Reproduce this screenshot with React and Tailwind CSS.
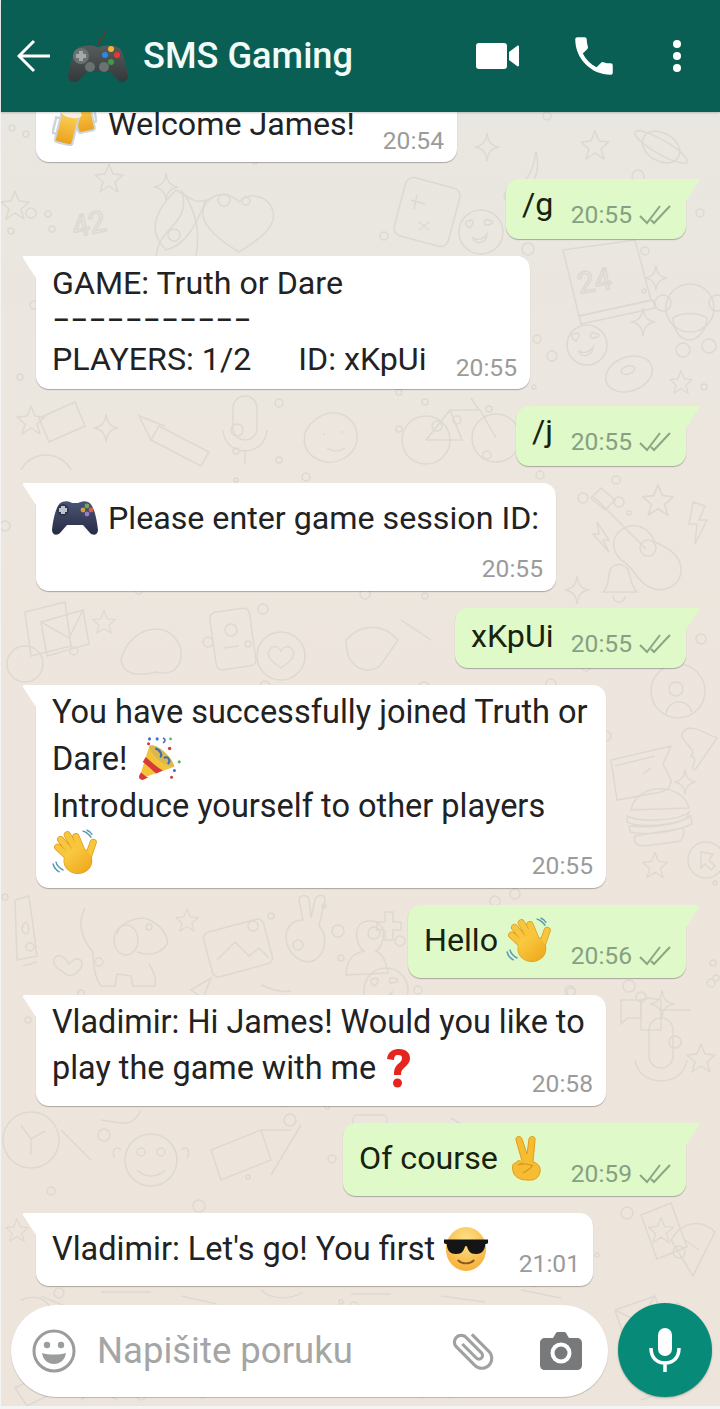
import { useId } from 'react'

// Petit générateur déterministe pour les points du papier peint
const rand = (seed) => {
  const x = Math.sin(seed * 127.1) * 43758.5453
  return x - Math.floor(x)
}
const dots = Array.from({ length: 190 }, (_, i) => ({
  x: Math.round(rand(i + 1) * 720),
  y: 112 + Math.round(rand(i + 300) * 1290),
  r: 2 + Math.round(rand(i + 700) * 4),
}))

const Star = ({ x, y, s = 1 }) => (
  <path transform={`translate(${x} ${y}) scale(${s})`} d="M0-14 4-4 14-3 6 4 9 14 0 8-9 14-6 4-14-3-4-4Z" strokeLinejoin="round" />
)
const Spark = ({ x, y, s = 1 }) => (
  <path transform={`translate(${x} ${y}) scale(${s})`} d="M0-14C1-5 4-2 11 0 4 2 1 5 0 14-1 5-4 2-11 0-4-2-1-5 0-14Z" />
)
const HeartFace = ({ x, y, r = 20 }) => (
  <g transform={`translate(${x} ${y})`}>
    <circle r={r} />
    <path d="M-11-4c-6-3-5-8-1-7 2-3 7 0 1 7ZM4-7c-2-5 3-7 5-4 4-1 5 4-5 4ZM-8 6c5 3 11 1 14-4 0 9-12 12-14 4Z" />
  </g>
)

function Wallpaper() {
  return (
    <svg className="absolute inset-0 h-full w-full" viewBox="0 112 719 1294" preserveAspectRatio="none" fill="none" stroke="#ddd9d1" strokeWidth="1.5" aria-hidden="true">
      {dots.map((d, i) => <circle key={i} cx={d.x} cy={d.y} r={d.r} />)}
      {/* haut */}
      <ellipse cx="660" cy="147" rx="20" ry="14" transform="rotate(30 660 147)" />
      <ellipse cx="660" cy="147" rx="30" ry="7" transform="rotate(30 660 147)" />
      <path d="M510 190c14-4 22-18 25-38 6 22-6 44-28 48-6 0-5-8 3-10Z" />
      <path d="M175 190c-20 20-30 40-10 60 20-5 30-25 40-50-10 5-20-5-30-10Z" />
      <path d="M290 220c10-15 30-25 20-50 16 20 20 45 14 70-20 22-50 10-34-20Z" transform="translate(-130 20)" />
      <path d="M298 232c-18-18-44 0-34 20 6 12 24 24 34 30 12-8 30-18 34-32 4-20-20-32-34-18Z" transform="translate(-60 -30)" />
      <rect x="398" y="182" width="56" height="60" rx="8" transform="rotate(15 426 212)" />
      <path d="M410 200l14 4M416 195l-3 14M418 222l10 8M428 222l-10 8" />
      <HeartFace x={480} y={232} r={22} />
      <Star x={108} y={178} /><Spark x={165} y={187} /><Star x={14} y={205} />
      <Star x={594} y={145} /><Spark x={486} y={147} />
      {/* calendrier et singe */}
      <path d="M562 250l72-10 16 60-72 16Z" />
      <path d="M578 316l74-16 2 8-74 16Z" />
      <text x="578" y="292" fontSize="30" fontFamily="Roboto" transform="rotate(-10 590 290)">24</text>
      <text x="72" y="236" fontSize="30" fontFamily="Roboto" transform="rotate(-12 80 230)">42</text>
      <circle cx="689" cy="308" r="24" />
      <circle cx="662" cy="303" r="8" /><circle cx="716" cy="303" r="8" />
      <path d="M672 318c8-6 26-6 34 0 0 10-8 22-18 22s-16-12-16-22Z" />
      <circle cx="682" cy="350" r="7" /><circle cx="708" cy="346" r="7" />
      <HeartFace x={586} y={345} />
      <ellipse cx="628" cy="374" rx="24" ry="17" transform="rotate(-20 628 374)" />
      <ellipse cx="627" cy="370" rx="7" ry="4" transform="rotate(-20 627 370)" />
      <Star x={680} y={382} s={0.8} /><Spark x={642} y={322} /><Spark x={655} y={278} s={0.9} />
      {/* vélo, micro */}
      <circle cx="425" cy="440" r="24" /><circle cx="495" cy="438" r="24" />
      <path d="M425 440l24-30h30l16 28M449 410l12 30h-36M470 398l8 12" />
      <path d="M232 408a12 12 0 0 1 24 0v20a12 12 0 0 1-24 0ZM222 430c2 28 42 28 44 0M244 450v14" />
      <path d="M314 420c16-14 40-6 42 14s-20 34-38 26-20-28-4-40ZM322 434h2M340 432h2M326 448c6 4 12 4 18 0" />
      <path d="M150 440l50 26 8-14-50-26ZM150 440l-12-24 26 10" />
      <path d="M38 418l36-16 10 24-36 16ZM20 470c10-20 40-20 50 0" />
      <Star x={30} y={420} /><Spark x={105} y={428} />
      {/* guitare, cloche */}
      <path d="M593 497l52 52" />
      <path d="M590 498l10-10 14 12-10 10Z" />
      <path d="M620 530c14-10 28-2 34 12 8 4 28 12 26 30-2 16-20 22-34 14-12-8-14-20-26-26-10-10-10-22 0-30Z" />
      <circle cx="647" cy="548" r="8" />
      <path d="M596 522l12 18-6 0 6 12-16-18h6ZM692 502l12 4-6 14 8 0-12 24 2-20-8 0Z" />
      <path d="M610 568a12 14 0 0 1 16 0c4 6 2 16 10 24h-34c8-8 4-18 8-24ZM612 596a6 6 0 0 0 12 0" />
      <Star x={657} y={500} s={1.1} /><Spark x={576} y={590} />
      {/* enveloppe, téléphone, etc. */}
      <path d="M24 612l40-10 6 44-40 10Z" /><path d="M40 622l42-12 6 34-42 12Z" /><path d="M40 622l28 16 14-28" />
      <Star x={103} y={622} s={0.8} />
      <path d="M120 660c8-34 50-44 60-10 2 18-10 26-24 22-18 4-34 4-36-12Z" />
      <rect x="212" y="610" width="40" height="58" rx="6" transform="rotate(-8 232 640)" />
      <circle cx="230" cy="630" r="6" /><path d="M222 648l16-2" />
      <circle cx="280" cy="656" r="24" /><path d="M280 668c-12-8-16-14-10-20 4-3 8-1 10 3 2-4 6-6 10-3 6 6 2 12-10 20Z" />
      <path d="M345 640c14-16 36-18 52 0l-18 26c-14 10-34 2-34-26ZM400 620l30 20" />
      <circle cx="24" cy="664" r="18" />
      {/* profil, carte, burger */}
      <circle cx="677" cy="691" r="27" /><circle cx="675" cy="689" r="7" /><path d="M665 714c2-16 22-16 26-2" />
      <path d="M610 760l60-14-8 18 8 16c0 8-4 10-10 12l-44 8ZM614 766l40-10M642 774l8-6" />
      <path d="M630 810c4-26 50-30 58-2ZM626 816c10 6 50 6 62-4l-2 6c-14 8-50 10-60 4ZM628 826c20 2 46 0 62-10l1 8c-16 8-46 12-62 8ZM634 836l48-8c2 6 0 14-8 14l-32 4c-6 0-10-4-8-10Z" />
      <path d="M682 732c8-10 22 2 34 6l-22 32c-8-2 6-10-4-14 8-6-14-16-8-24Z" />
      <circle cx="705" cy="860" r="18" /><path d="M700 852l12 2-4 6 6 6-4 4-6-6-4 4Z" />
      <Star x={654} y={865} s={0.9} /><Spark x={684} y={782} s={0.9} />
      {/* bouteille, chien, cadre, main */}
      <path d="M14 900l14-4 8 60-20 4ZM22 966l14-4" /><path d="M22 932c-3-5 2-10 3-10 4 4 4 16-3 10Z" />
      <path d="M84 908c-8 14-4 30 8 44 0 14 2 26 8 34h14l2-12 14 2 2 10h22c2-8-2-16-6-22" />
      <path d="M116 934c4-14 26-20 36-12 10 6 16 16 14 22-6 10-18 12-30 8" />
      <ellipse cx="125" cy="940" rx="12" ry="15" />
      <Star x={186} y={920} s={0.8} />
      <path d="M66 968c-12-6-10-14-6-16 4-2 8 2 12 8 8-10 16-4 12 4-6 8-12 10-18 4Z" transform="translate(-4 4)" />
      <rect x="206" y="925" width="62" height="46" rx="6" transform="rotate(-15 237 948)" />
      <path d="M216 960l18-18 14 14 10-8 10 10" /><circle cx="252" cy="926" r="5" />
      <path d="M302 920c-12 0-20 10-16 24 4 12 16 22 28 16 10-6 14-24 4-34l6-26c0-6-8-6-10 0l-4 18-2-18c0-6-10-6-10 0Z" />
      <path d="M345 975c0-18 10-22 18-24-8-4-14-30 6-30s14 26 6 30c8 4 10 12 12 22Z" />
      <path d="M376 922h8v-10h8v10h8v8h-8v10h-8v-10h-8Z" />
      <HeartFace x={385} y={990} r={22} />
      <path d="M190 990l20-12-8 20ZM260 985c10 4 20 8 30 6" />
      {/* bas de page */}
      <path d="M620 1000h20v18h-14l-6 6Z" />
      <path d="M640 1000c8-4 16 0 20 0v30h-20ZM660 1010h30" />
      <path d="M648 1030a12 12 0 0 1 24 0v26a12 12 0 0 1-24 0ZM634 1060c4 28 48 28 52 0" />
      <Spark x={661} y={1004} /><Star x={700} y={1058} />
      <path d="M620 1140c10-10 24-14 38-8 14 10 12 34-2 44-14 6-34 4-40-10-2-10-2-18 4-26Z" />
      <circle cx="30" cy="1140" r="28" /><path d="M20 1125l10 14 14-8M30 1139v16" />
      <circle cx="150" cy="1160" r="26" /><circle cx="140" cy="1152" r="4" /><circle cx="160" cy="1152" r="4" /><path d="M120 1150c-6-6-10 2-6 8M180 1150c6-6 10 2 6 8M136 1170c8 8 20 8 28 0" />
      <path d="M60 1130l30 30M100 1120c20 2 30 10 40-10M210 1150l50-20 10 30-50 20Z" />
      <path d="M300 1125l-30 50M260 1130h30" />
      <rect x="352" y="1115" width="34" height="24" rx="4" /><path d="M450 1118l50 30" />
      <path d="M670 1240c10-18 30-22 44-8l-22 44ZM684 1240l14 10" />
      <path d="M640 1215l30-12 16 44-30 12Z" /><Star x={660} y={1230} s={0.9} />
      <path d="M614 1310l40-14 10 30-40 14ZM614 1310l24 12 16-26" />
      <path d="M20 1300c14-6 26-2 30 10M40 1296l24 10M100 1292h50M180 1296l36 8M260 1290c10 10 30 10 42 2M350 1294h40M440 1296l44 6M520 1290l40 8" />
      <Star x={16} y={1230} s={0.8} />
      <path d="M14 1388l20-10 12 18-20 10ZM80 1400c10-10 24-10 36 0M200 1398l30-10M300 1392h40M420 1398c10-8 20-8 30 0M520 1396l30-8M640 1400l34-12" />
    </svg>
  )
}

function Tail({ out }) {
  const color = out ? 'text-[#dff9c8]' : 'text-white'
  if (out) {
    return (
      <svg className={`absolute -right-[14px] top-0 h-[22px] w-[15px] ${color}`} viewBox="0 0 15 22" fill="currentColor" aria-hidden="true">
        <path d="M0 0H12.5Q15 0 14 2L1 22H0Z" />
      </svg>
    )
  }
  return (
    <svg className={`absolute -left-[14px] top-0 h-[22px] w-[15px] ${color}`} viewBox="0 0 15 22" fill="currentColor" aria-hidden="true">
      <path d="M15 0H2.5Q0 0 1 2L14 22H15Z" />
    </svg>
  )
}

function Checks() {
  return (
    <svg className="ml-[7px] h-[20px] w-[32px]" viewBox="0 0 32 20" fill="none" stroke="#8aa685" strokeWidth="2" aria-hidden="true">
      <path d="M1 11l7 7L21 1M12 15l3 3L31 1" />
    </svg>
  )
}

function Bubble({ out, tail = true, className = '', pad = 'pt-1', size = 'text-[32.2px]', time, timeMb = 'mb-[8px]', children }) {
  const base = out
    ? 'self-end bg-[#dff9c8] text-[#17220f] rounded-b-[13px] rounded-tl-[13px] pr-[15px]'
    : 'self-start bg-white text-[#222222] rounded-b-[13px] rounded-tr-[13px] pr-[13px]'
  return (
    <div className={`relative grid pl-4 shadow-[0_1px_1px_rgba(0,0,0,0.28)] ${base} ${pad} ${className}`}>
      {tail && <Tail out={out} />}
      <div className={`-mt-px whitespace-nowrap leading-[46px] [grid-area:1/1] ${size}`}>{children}</div>
      <div className={`flex items-center self-end justify-self-end text-[24.6px] leading-[28px] [grid-area:1/1] ${timeMb} ${out ? 'text-[#86a083]' : 'text-[#9b9b9b]'}`}>
        {time}
        {out && <Checks />}
      </div>
    </div>
  )
}

function Emoji({ children, w = 46, h = 46, vb = '0 0 48 48', cls = '' }) {
  return (
    <svg className={`inline-block align-middle ${cls}`} style={{ width: w, height: h }} viewBox={vb} aria-hidden="true">
      {children}
    </svg>
  )
}

function Beers() {
  return (
    <Emoji w={45} h={44} vb="0 0 45 44" cls="mr-[11px]">
      <defs>
        <linearGradient id="beerGold" x1="0" y1="0" x2="0" y2="1">
          <stop offset="0" stopColor="#fbd35a" />
          <stop offset="1" stopColor="#eaa01c" />
        </linearGradient>
      </defs>
      <g transform="rotate(-12 32 18)">
        <rect x="24" y="0" width="17" height="30" rx="3" fill="url(#beerGold)" stroke="#ced5d8" strokeWidth="2" />
        <path d="M41 8h3v14h-3" fill="none" stroke="#ced5d8" strokeWidth="2.500" />
      </g>
      <g transform="rotate(14 14 26)">
        <rect x="6" y="10" width="18" height="32" rx="3" fill="url(#beerGold)" stroke="#ced5d8" strokeWidth="2" />
        <path d="M6 18H2v16h4" fill="none" stroke="#ced5d8" strokeWidth="2.500" />
        <ellipse cx="15" cy="10" rx="11" ry="5" fill="#f6f1e2" />
      </g>
      <ellipse cx="26" cy="5" rx="9" ry="5" fill="#f6f1e2" />
    </Emoji>
  )
}

function Pad() {
  return (
    <Emoji w={46} h={36} vb="0 0 46 36" cls="mr-[10px]">
      <defs>
        <linearGradient id="padNavy" x1="0" y1="0" x2="0" y2="1">
          <stop offset="0" stopColor="#4a5475" />
          <stop offset="1" stopColor="#262c44" />
        </linearGradient>
      </defs>
      <path d="M10 2c5-2 9 0 10 1h6c2-1 6-3 10-1 6 2 9 18 10 28 0 5-5 6-8 3l-7-8H15l-7 8c-3 3-8 2-8-3C1 20 4 4 10 2Z" fill="url(#padNavy)" />
      <circle cx="11" cy="10" r="6" fill="#30364e" />
      <path d="M9 6h4v2h2v4h-2v2H9v-2H7V8h2Z" fill="#bfc3ce" />
      <circle cx="35" cy="6" r="2.400" fill="#6ea85a" /><circle cx="31" cy="10" r="2.400" fill="#d9a03f" />
      <circle cx="39" cy="10" r="2.400" fill="#d9604a" /><circle cx="35" cy="14" r="2.400" fill="#9a7cd0" />
    </Emoji>
  )
}

function HeaderPad() {
  return (
    <svg className="mr-[15px] h-[54px] w-[60px]" viewBox="0 0 60 54" aria-hidden="true">
      <defs>
        <linearGradient id="padGrey" x1="0" y1="0" x2="0" y2="1">
          <stop offset="0" stopColor="#565b5b" />
          <stop offset="1" stopColor="#333838" />
        </linearGradient>
      </defs>
      <path d="M30 17c0-6 2-6 4-8 2-2 3-4 4-9" fill="none" stroke="#5e3a36" strokeWidth="1.500" />
      <path d="M10 19c6-3 14-3 19-1h3c5-2 14-2 19 1 5 3 8 22 9 28 0 6-7 8-11 3l-7-7H19l-7 7c-4 5-12 3-12-3 1-6 5-25 10-28Z" fill="url(#padGrey)" />
      <circle cx="13" cy="27" r="8" fill="#6b7070" />
      <path d="M11 22h4v3h3v4h-3v3h-4v-3H8v-4h3Z" fill="#a5a9a9" />
      <circle cx="43" cy="20" r="3" fill="#f2b632" /><circle cx="37" cy="26" r="3" fill="#2d88e0" />
      <circle cx="49" cy="26" r="3" fill="#e53935" /><circle cx="43" cy="33" r="3" fill="#3f9b45" />
      <circle cx="22" cy="38" r="5" fill="#6b7070" /><circle cx="36" cy="38" r="5" fill="#6b7070" />
    </svg>
  )
}

function Wave({ w = 46 }) {
  const id = useId()
  const fingers = 'M19 31L6 19M22 27L9 11M27 25L16 6M32 25L25 8M37 31L43 14'
  return (
    <Emoji w={w} h={w}>
      <defs>
        <linearGradient id={id} x1="0" y1="0" x2="1" y2="1">
          <stop offset="0" stopColor="#fcd24a" />
          <stop offset="1" stopColor="#eda418" />
        </linearGradient>
      </defs>
      <path d="M32 2c4 1 7 4 9 7M36 1c3 1 5 3 6 5M4 34c1 4 4 7 8 9M1 36c1 4 3 7 7 9" fill="none" stroke="#5a9ab5" strokeWidth="1.600" />
      <path d={fingers} fill="none" stroke="#dd9a1c" strokeWidth="7.500" strokeLinecap="round" />
      <ellipse cx="27" cy="33" rx="15" ry="14" fill="#dd9a1c" />
      <path d={fingers} fill="none" stroke="#f8c63c" strokeWidth="6" strokeLinecap="round" />
      <ellipse cx="27" cy="33" rx="14.300" ry="13.300" fill={`url(#${id})`} />
    </Emoji>
  )
}

function Party() {
  return (
    <Emoji w={46} h={48} cls="ml-0.5">
      <path d="M1 45L12 10l26 22Z" fill="#f5c33b" />
      <path d="M8 22c6 5 12 11 18 14l-7 3C15 36 10 31 5 27ZM3 38c3 2 5 5 8 5l-6 3c-2 0-4-2-4-4Z" fill="#d83a3a" />
      <path d="M12 10c8-3 24 12 26 22-8 2-26-12-26-22Z" fill="#d8b94f" />
      <path d="M18 13c5 1 8 7 5 9M27 23c4-3 8 3 4 6" fill="none" stroke="#3e6bc0" strokeWidth="2.200" />
      <g fill="#3b6fd0"><circle cx="12" cy="3" r="1.600" /><circle cx="20" cy="3" r="1.600" /><circle cx="38" cy="36" r="1.600" /></g>
      <g fill="#d83a3a"><circle cx="11" cy="8" r="1.600" /><circle cx="33" cy="13" r="1.800" /><circle cx="35" cy="43" r="1.600" /></g>
      <g fill="#5fb15b"><circle cx="34" cy="3" r="1.400" /><circle cx="43" cy="27" r="1.600" /></g>
      <path d="M26 2c3 1 3 4 0 5" fill="none" stroke="#3e6bc0" strokeWidth="1.600" />
    </Emoji>
  )
}

function Question() {
  return (
    <Emoji w={26} h={40} vb="0 0 26 40" cls="ml-[9px]">
      <path d="M2 11C3 3 9 1 14 1c7 0 11 4 11 9 0 5-3 7-6 10-2 2-3 3-3 7H9c0-6 1-8 4-11 2-2 4-3 4-6 0-2-1-3-4-3-3 0-4 2-4 5Z" fill="#e5261f" />
      <circle cx="12.500" cy="35" r="4.500" fill="#e5261f" />
    </Emoji>
  )
}

function Peace() {
  return (
    <Emoji w={36} h={46} vb="0 0 36 46">
      <path d="M14 26L8 5c-1-4 5-5 6-1l5 15 2-15c1-4 7-3 6 1l-2 22c5 1 8 5 7 10-1 6-6 9-13 8-7 0-13-3-14-9-1-4-1-8 3-8 1-3 6-4 6 2" fill="#f6bd33" stroke="#e09c1b" strokeWidth="1" />
      <path d="M10 30c4-2 12-1 15 1M15 38c3-2 7-3 9-7" fill="none" stroke="#d9921a" strokeWidth="1.200" />
    </Emoji>
  )
}

function Cool() {
  return (
    <Emoji w={46} h={48}>
      <defs>
        <radialGradient id="coolFace" cx="0.5" cy="0.3" r="0.8">
          <stop offset="0" stopColor="#fde28b" />
          <stop offset="1" stopColor="#f6a92c" />
        </radialGradient>
      </defs>
      <ellipse cx="24" cy="24" rx="21" ry="23" fill="url(#coolFace)" />
      <path d="M1 14h46v4l-3 1c0 8-6 11-11 10-5 0-7-4-8-8h-2c-1 4-3 8-8 8-5 1-11-2-11-10l-3-1Z" fill="#151515" />
      <path d="M16 36c4 4 12 4 16 0" fill="none" stroke="#8a5a1c" strokeWidth="2" strokeLinecap="round" />
    </Emoji>
  )
}

export default function App() {
  return (
    <div className="flex h-[1409px] w-[720px] flex-col overflow-hidden bg-[#f4f4f4] pb-[3px] pl-px font-['Roboto',sans-serif]">
      {/* barre du haut */}
      <header className="relative z-10 flex h-[112px] shrink-0 items-center bg-[#0a5f55] pl-4 pr-[39px] shadow-[0_1px_2px_rgba(0,0,0,0.2)]">
        <svg className="mr-[17px] h-[34px] w-[34px]" viewBox="0 0 34 34" fill="none" stroke="#ffffff" strokeWidth="3" aria-hidden="true">
          <path d="M33 17H3M17 2L2 17l15 15" />
        </svg>
        <HeaderPad />
        <span className="text-[36.2px] font-medium leading-none text-[#f1fbf8]">SMS Gaming</span>
        <svg className="ml-auto h-[28px] w-[43px] translate-x-[2px]" viewBox="0 0 43 28" fill="#ffffff" aria-hidden="true">
          <rect x="0" y="1" width="31" height="26" rx="3" />
          <path d="M33 10l8-6c1-1 2 0 2 1v18c0 1-1 2-2 1l-8-6Z" />
        </svg>
        <svg className="ml-[51px] h-[50px] w-[50px] translate-x-[1px]" viewBox="0 0 24 24" fill="#ffffff" aria-hidden="true">
          <path d="M6.62 10.79c1.44 2.83 3.76 5.14 6.59 6.59l2.2-2.2c.27-.27.67-.36 1.02-.24 1.12.37 2.33.57 3.57.57.55 0 1 .45 1 1V20c0 .55-.45 1-1 1-9.39 0-17-7.61-17-17 0-.55.45-1 1-1h3.5c.55 0 1 .45 1 1 0 1.25.2 2.45.57 3.57.11.35.03.74-.25 1.02l-2.2 2.2z" />
        </svg>
        <div className="ml-[55px] flex flex-col gap-[4px]">
          <span className="h-[8px] w-[8px] rounded-full bg-white" />
          <span className="h-[8px] w-[8px] rounded-full bg-white" />
          <span className="h-[8px] w-[8px] rounded-full bg-white" />
        </div>
      </header>

      {/* conversation */}
      <main className="relative flex flex-1 flex-col overflow-hidden bg-gradient-to-b from-[#e9e7e1] via-[#ede6de] via-[32%] to-[#ede5db]">
        <Wallpaper />
        <div className="relative flex flex-col gap-[17px] pl-[35px] pr-[34px]">
          <Bubble tail={false} className="-mt-[30px] h-[80px] w-[421px]" pad="pt-[20px]" time="20:54" timeMb="mb-[7px]">
            <span className="flex items-center"><Beers />Welcome James!</span>
          </Bubble>
          <Bubble out className="h-[60px] w-[180px]" time="20:55" timeMb="mb-[10px]" pad="pt-[3px]">/g</Bubble>
          <Bubble className="h-[133px] w-[494px]" time="20:55" timeMb="mb-[7px]" pad="pt-[9px]">
            <div className="leading-[38px]">GAME: Truth or Dare</div>
            <div className="text-[31.7px] leading-[38px]">−−−−−−−−−−−</div>
            <div className="leading-[38px]">PLAYERS: 1/2<span className="ml-[47px]">ID: xKpUi</span></div>
          </Bubble>
          <Bubble out className="h-[60px] w-[170px]" time="20:55" timeMb="mb-[10px]" pad="pt-[3px]">/j</Bubble>
          <Bubble className="h-[108px] w-[520px]" time="20:55" pad="pt-[13px]">
            <span className="flex items-center"><Pad />Please enter game session ID:</span>
          </Bubble>
          <Bubble out className="h-[60px] w-[231px]" time="20:55" timeMb="mb-[10px]" pad="pt-[6px]">xKpUi</Bubble>
          <Bubble className="h-[203px] w-[570px]" size="text-[32.5px]" time="20:55" pad="pt-[5px]">
            <div>You have successfully joined Truth or</div>
            <div className="flex items-center">Dare!<span className="ml-[9px] flex"><Party /></span></div>
            <div>Introduce yourself to other players</div>
            <div className="flex"><Wave /></div>
          </Bubble>
          <Bubble out className="h-[73px] w-[278px]" time="20:56" pad="pt-[13px]">
            <span className="flex items-center">Hello<span className="ml-[8px] flex"><Wave /></span></span>
          </Bubble>
          <Bubble className="h-[111px] w-[570px]" size="text-[32.4px]" time="20:58" pad="pt-[5px]">
            <div>Vladimir: Hi James! Would you like to</div>
            <div className="flex items-center">play the game with me<Question /></div>
          </Bubble>
          <Bubble out className="h-[73px] w-[343px]" time="20:59" pad="pt-[13px]">
            <span className="flex items-center">Of course<span className="ml-[10px] flex"><Peace /></span></span>
          </Bubble>
          <Bubble className="h-[73px] w-[557px]" size="text-[32.5px]" time="21:01" pad="pt-[13px]">
            <span className="flex items-center">Vladimir: Let's go! You first<span className="ml-[8px] flex"><Cool /></span></span>
          </Bubble>
        </div>

        {/* zone de saisie */}
        <div className="relative mt-auto flex items-center gap-[10px] pb-[9px] pl-[10px] pr-[7px]">
          <div className="flex h-[92px] w-[597px] items-center rounded-[46px] bg-white pl-[21px] shadow-[0_1px_1px_rgba(0,0,0,0.2)]">
            <svg className="h-[44px] w-[44px]" viewBox="0 0 44 44" aria-hidden="true">
              <circle cx="22" cy="22" r="20" fill="none" stroke="#9b9d9d" strokeWidth="3" />
              <circle cx="15" cy="16" r="3.200" fill="#9b9d9d" /><circle cx="29" cy="16" r="3.200" fill="#9b9d9d" />
              <path d="M10 24c7 2 17 2 24 0-1 7-6 11-12 11s-11-4-12-11Z" fill="#9b9d9d" />
            </svg>
            <span className="ml-[21px] mt-px w-[255px] whitespace-nowrap text-[36.5px] leading-none text-[#a4a6a6]">Napišite poruku</span>
            <svg className="ml-[96px] h-[50px] w-[50px] -rotate-45" viewBox="0 0 24 24" fill="#a0a2a2" aria-hidden="true">
              <path d="M16.5 6v11.5c0 2.21-1.79 4-4 4s-4-1.79-4-4V5c0-1.38 1.12-2.5 2.5-2.5s2.5 1.12 2.5 2.5v10.5c0 .55-.45 1-1 1s-1-.45-1-1V6H10v9.5c0 1.38 1.12 2.5 2.5 2.5s2.5-1.12 2.5-2.5V5c0-2.21-1.79-4-4-4S7 2.79 7 5v12.5c0 3.04 2.46 5.5 5.5 5.5s5.5-2.46 5.5-5.5V6h-1.5z" />
            </svg>
            <svg className="ml-[42px] h-[38px] w-[42px]" viewBox="0 0 42 38" aria-hidden="true">
              <path d="M5 6h8l3-5c.4-.6 1-1 2-1h6c1 0 1.600.4 2 1l3 5h8c3 0 5 2 5 5v22c0 3-2 5-5 5H5c-3 0-5-2-5-5V11c0-3 2-5 5-5Z" fill="#77797b" />
              <circle cx="21" cy="21" r="10.500" fill="#ffffff" />
              <circle cx="21" cy="21" r="6.500" fill="#77797b" />
            </svg>
          </div>
          <div className="-mt-[1px] flex h-[94px] w-[94px] items-center justify-center rounded-full bg-[#078b78] shadow-[0_1px_2px_rgba(0,0,0,0.25)]">
            <svg className="h-[44px] w-[32px]" viewBox="0 0 32 44" aria-hidden="true">
              <rect x="9" y="0" width="14" height="28" rx="7" fill="#ffffff" />
              <path d="M2 20c0 10 6 15 14 15s14-5 14-15M16 35v9" fill="none" stroke="#ffffff" strokeWidth="3.500" />
            </svg>
          </div>
        </div>
      </main>
    </div>
  )
}
